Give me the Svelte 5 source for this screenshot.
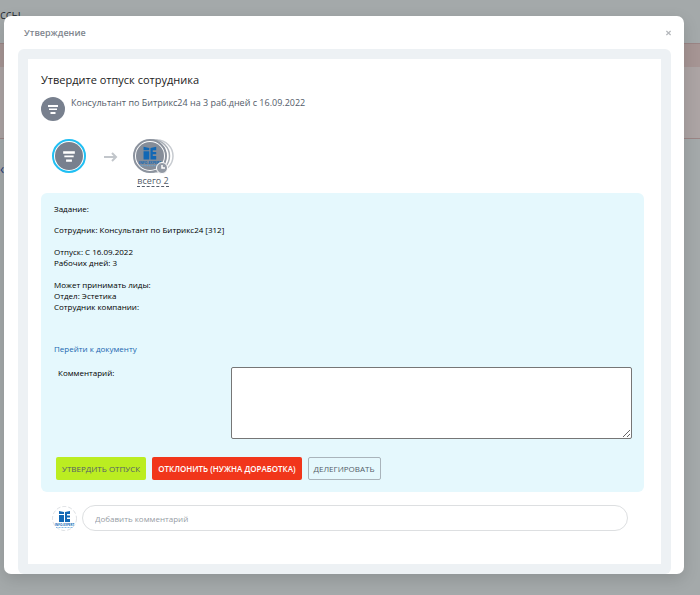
<script lang="ts">
  let comment = $state("");
  let reply = $state("");

  const details = [
    ["Сотрудник: Консультант по Битрикс24 [312]"],
    ["Отпуск: С 16.09.2022", "Рабочих дней: 3"],
    ["Может принимать лиды:", "Отдел: Эстетика", "Сотрудник компании:"],
  ];
</script>

{#snippet process()}
  <svg class="process" viewBox="0 0 24 24" aria-hidden="true">
    <circle cx="12" cy="12" r="12" fill="#78808e" />
    <path d="M7 8h10v2H7zM8 11.500h8v1.500H8zM9.500 15h5v2h-5z" fill="#fff" />
  </svg>
{/snippet}

{#snippet brand()}
  <path d="M7 5l5 1v2H7zM7 9h5v7H7zM13 6l5-1v3h-3v1.500h3v2h-3V13h3v3h-5z" fill="#1268b5" />
  <text class="brand-name" x="12.500" y="20" text-anchor="middle">INFO-EXPERT</text>
  <path d="M4 21.500h17" stroke="#69aadd" stroke-width=".8" stroke-dasharray="1 .5" />
{/snippet}

<div class="page">
  <div class="page-title">ссы</div>
  <div class="notice"><div class="notice-head"></div></div>
  <a class="page-link" href="#processes">‹</a>
</div>

<div class="overlay">
  <div class="popup" role="dialog" aria-labelledby="popup-title">
    <header>
      <span id="popup-title">Утверждение</span>
      <button class="close" type="button" aria-label="Закрыть">
        <svg viewBox="0 0 6 6"><path d="M.5 .5l5 5M5.500 .5l-5 5" stroke="#b5b8bc" stroke-width="1.500" /></svg>
      </button>
    </header>

    <div class="frame">
      <main>
        <h1>Утвердите отпуск сотрудника</h1>
        <div class="summary">
          {@render process()}
          <span>Консультант по Битрикс24 на 3 раб.дней с 16.09.2022</span>
        </div>

        <div class="route">
          <div class="starter">{@render process()}</div>
          <svg class="arrow" viewBox="0 0 14 10" aria-hidden="true">
            <path d="M0 5h12M8 1l4 4-4 4" fill="none" stroke="#c2c6cb" stroke-width="2" />
          </svg>
          <div class="approvers">
            <svg viewBox="0 0 42 36" aria-hidden="true">
              <circle cx="25" cy="17" r="16" fill="#fff" stroke="#c7cbd0" stroke-width="1.500" />
              <circle cx="21.500" cy="17" r="16" fill="#fff" stroke="#a7adb5" stroke-width="1.500" />
              <circle cx="18" cy="17" r="16" fill="#fff" stroke="#8c939e" stroke-width="2" />
              <circle cx="18" cy="17" r="14" fill="#858d99" />
              <g transform="translate(3.500 2) scale(1.150)">{@render brand()}</g>
              <circle cx="30" cy="29" r="5.500" fill="#9299a4" stroke="#fff" />
              <path d="M30 26v3h3" fill="none" stroke="#fff" stroke-width="1.500" />
            </svg>
            <a href="#approvers">всего 2</a>
          </div>
        </div>

        <section class="task">
          <p class="task-title">Задание:</p>
          {#each details as group}
            <p>
              {#each group as line}
                <span>{line}</span>
              {/each}
            </p>
          {/each}
          <a class="document" href="#document">Перейти к документу</a>

          <div class="field">
            <label for="comment">Комментарий:</label>
            <textarea id="comment" bind:value={comment}></textarea>
          </div>

          <div class="actions">
            <button class="approve" type="button">Утвердить отпуск</button>
            <button class="decline" type="button">Отклонить (нужна доработка)</button>
            <button class="delegate" type="button">Делегировать</button>
          </div>
        </section>

        <div class="reply">
          <svg viewBox="0 0 25 25" aria-hidden="true">
            <circle cx="12.500" cy="12.500" r="12" fill="#fff" stroke="#cfd3d7" stroke-width=".7" stroke-dasharray="4 2" />
            {@render brand()}
          </svg>
          <input type="text" aria-label="Добавить комментарий" placeholder="Добавить комментарий" bind:value={reply} />
        </div>
      </main>
    </div>
  </div>
</div>

<style>
  :global(body) {
    margin: 0;
    background: #a4a9aa;
    font-family: "Open Sans", "Noto Sans", sans-serif;
  }
  .page-title {
    height: 36px;
    padding-top: 7px;
    font-size: 12px;
    line-height: 16px;
    color: #30363d;
  }
  .notice {
    height: 94px;
    border: solid #9b8585;
    border-width: 1px 0;
    background: #aca4a4;
  }
  .notice-head {
    height: 23px;
    background: #a69594;
  }
  .page-link {
    display: block;
    padding-top: 20px;
    font-size: 14px;
    line-height: 20px;
    color: #293d78;
    text-decoration: none;
  }
  .overlay {
    position: absolute;
    inset: 0;
    padding: 16px 16px 21px 4px;
  }
  .popup {
    padding: 0 13px 0 14px;
    border-radius: 7px;
    background: #fff;
    box-shadow: 0 5px 16px rgba(0, 0, 0, 0.14);
  }
  header {
    display: flex;
    align-items: center;
    justify-content: space-between;
    height: 33px;
    padding-left: 6px;
    font-size: 9px;
    font-weight: 600;
    color: #80868e;
  }
  button {
    font-family: inherit;
    cursor: pointer;
  }
  .close {
    display: flex;
    padding: 0;
    border: 0;
    background: none;
  }
  .close svg {
    width: 5px;
    height: 6px;
  }
  .frame {
    padding: 10px;
    border-radius: 6px;
    background: #edf1f4;
  }
  main {
    padding: 13px 17px 33px 13px;
    background: #fff;
  }
  h1 {
    margin: 0;
    font-size: 11px;
    font-weight: 400;
    line-height: 16px;
    color: #222;
  }
  .summary {
    display: flex;
    gap: 6px;
    margin-top: 9px;
    font-size: 9px;
    line-height: 12px;
    color: #535c69;
  }
  .process {
    display: block;
    width: 24px;
    height: 24px;
  }
  .route {
    display: flex;
    align-items: flex-start;
    height: 54px;
    margin-top: 18px;
    padding-left: 11px;
  }
  .starter {
    padding: 1px;
    border: 2px solid #20bff3;
    border-radius: 50%;
  }
  .starter .process {
    width: 28px;
    height: 28px;
  }
  .arrow {
    width: 14px;
    height: 10px;
    margin: 13px 14px 0 18px;
  }
  .approvers {
    display: flex;
    flex-direction: column;
    align-items: center;
  }
  .approvers svg {
    width: 42px;
    height: 36px;
  }
  .approvers a {
    border-bottom: 1px dashed #535c69;
    font-size: 9px;
    line-height: 11px;
    color: #535c69;
    text-decoration: none;
  }
  .brand-name {
    font-family: "Open Sans", sans-serif;
    font-size: 3px;
    font-weight: 700;
    fill: #1268b5;
  }
  .task {
    padding: 10px 12px 12px 13px;
    border-radius: 6px;
    background: #e5f8fd;
    font-size: 8px;
    line-height: 11px;
    color: #000;
  }
  .task p {
    margin: 0 0 11px;
  }
  .task .task-title {
    margin-bottom: 10px;
  }
  .task span {
    display: block;
  }
  .document {
    display: block;
    margin-top: 31px;
    color: #2067b0;
    text-decoration: none;
  }
  .field {
    display: flex;
    gap: 12px;
    margin-top: 13px;
    padding-left: 4px;
  }
  .field label {
    flex: 0 0 161px;
    font-weight: 500;
  }
  textarea {
    flex: 1;
    box-sizing: border-box;
    height: 72px;
    border: 1px solid #767676;
    border-radius: 2px;
    background: #fff;
    font: inherit;
  }
  .actions {
    display: flex;
    gap: 6px;
    margin-top: 18px;
    padding-left: 2px;
  }
  .actions button {
    height: 23px;
    padding: 0 5px;
    border: 1px solid transparent;
    border-radius: 2px;
    font-size: 8px;
    font-weight: 500;
    text-transform: uppercase;
    white-space: nowrap;
  }
  .actions .approve {
    background: #bbed21;
    color: #535c69;
  }
  .actions .decline {
    background: #f1361b;
    color: #fff;
    font-weight: 600;
  }
  .actions .delegate {
    border-color: #a9b4bb;
    background: none;
    color: #535c69;
  }
  .reply {
    display: flex;
    align-items: center;
    gap: 5px;
    margin-top: 13px;
    padding: 0 16px 0 11px;
  }
  .reply svg {
    width: 25px;
    height: 25px;
  }
  .reply input {
    flex: 1;
    box-sizing: border-box;
    height: 26px;
    padding: 0 12px;
    border: 1px solid #dddfe1;
    border-radius: 13px;
    font: inherit;
    font-size: 8px;
  }
  .reply input::placeholder {
    color: #979da5;
  }
</style>
